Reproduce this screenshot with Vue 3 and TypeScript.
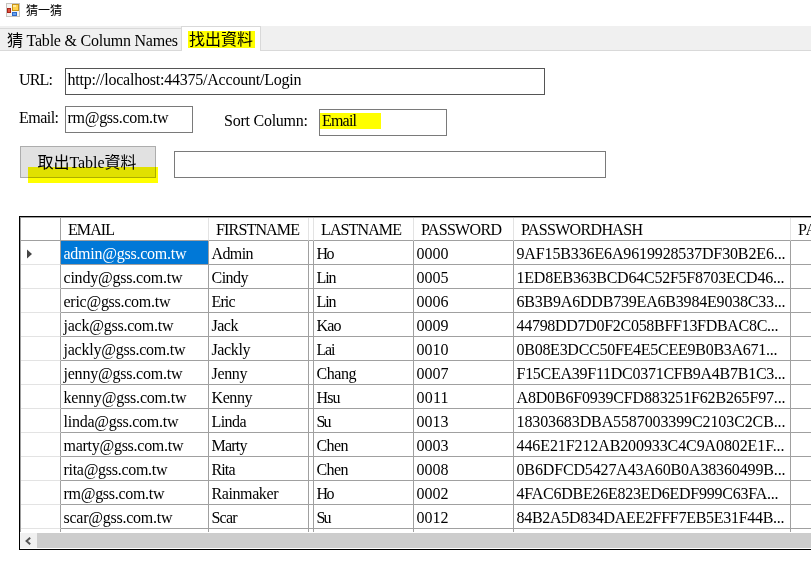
<script setup lang="ts">
import type { Directive } from 'vue'

interface Person {
  email: string
  emailWidth: number
  first: string
  firstWidth: number
  last: string
  lastWidth: number
  password: string
  hash: string
  hashWidth: number
}

/** Tracks a text run so that it takes up the given width in pixels. */
const vFit: Directive<HTMLElement, number> = {
  mounted(el, { value }) {
    const natural = el.getBoundingClientRect().width
    const gaps = Math.max(1, (el.textContent ?? '').length - 1)
    el.style.letterSpacing = `${(value - natural) / gaps}px`
  },
}

type Row = [string, number, string, number, string, number, string, string, number]

const rows: Row[] = [
  ['admin@gss.com.tw', 123, 'Admin', 42, 'Ho', 18, '0000', '9AF15B336E6A9619928537DF30B2E6...', 269],
  ['cindy@gss.com.tw', 119, 'Cindy', 37, 'Lin', 20, '0005', '1ED8EB363BCD64C52F5F8703ECD46...', 268],
  ['eric@gss.com.tw', 107, 'Eric', 24, 'Lin', 20, '0006', '6B3B9A6DDB739EA6B3984E9038C33...', 269],
  ['jack@gss.com.tw', 110, 'Jack', 27, 'Kao', 25, '0009', '44798DD7D0F2C058BFF13FDBAC8C...', 262],
  ['jackly@gss.com.tw', 122, 'Jackly', 39, 'Lai', 19, '0010', '0B08E3DCC50FE4E5CEE9B0B3A671...', 261],
  ['jenny@gss.com.tw', 119, 'Jenny', 36, 'Chang', 40, '0007', 'F15CEA39F11DC0371CFB9A4B7B1C3...', 269],
  ['kenny@gss.com.tw', 123, 'Kenny', 41, 'Hsu', 24, '0011', 'A8D0B6F0939CFD883251F62B265F97...', 269],
  ['linda@gss.com.tw', 115, 'Linda', 35, 'Su', 15, '0013', '18303683DBA5587003399C2103C2CB...', 269],
  ['marty@gss.com.tw', 120, 'Marty', 36, 'Chen', 32, '0003', '446E21F212AB200933C4C9A0802E1F...', 268],
  ['rita@gss.com.tw', 104, 'Rita', 24, 'Chen', 32, '0008', '0B6DFCD5427A43A60B0A38360499B...', 269],
  ['rm@gss.com.tw', 101, 'Rainmaker', 67, 'Ho', 18, '0002', '4FAC6DBE26E823ED6EDF999C63FA...', 262],
  ['scar@gss.com.tw', 109, 'Scar', 26, 'Su', 15, '0012', '84B2A5D834DAEE2FFF7EB5E31F44B...', 268],
]

const people: Person[] = rows.map(
  ([email, emailWidth, first, firstWidth, last, lastWidth, password, hash, hashWidth]) => ({
    email, emailWidth, first, firstWidth, last, lastWidth, password, hash, hashWidth,
  }),
)

const headers = [
  { label: 'EMAIL', width: 47 },
  { label: 'FIRSTNAME', width: 84 },
  { label: '', width: 0 },
  { label: 'LASTNAME', width: 81 },
  { label: 'PASSWORD', width: 81 },
  { label: 'PASSWORDHASH', width: 122 },
  { label: 'PA', width: 19 },
]
</script>

<template>
  <div class="window">
    <header class="titlebar">
      <svg class="app-icon" width="14" height="14" viewBox="0 0 14 14">
        <rect x="0.5" y="0.5" width="13" height="13" fill="#f4f4f2" stroke="#c6c4c0" />
        <rect x="6.5" y="1.5" width="6" height="6" fill="#ffd34e" stroke="#c99416" />
        <rect x="7" y="2" width="3" height="2" fill="#ffeaa0" />
        <rect x="1.5" y="5.5" width="3" height="4" fill="#e0503c" stroke="#a82318" />
        <rect x="6.5" y="9.5" width="4" height="3" fill="#65a2ee" stroke="#2f68c8" />
      </svg>
      <span class="title">猜一猜</span>
    </header>

    <nav class="tabs">
      <div class="tab"><span v-fit="171">猜 Table &amp; Column Names</span></div>
      <div class="tab active"><span class="marked">找出資料</span></div>
    </nav>

    <main class="page">
      <div class="line">
        <label class="caption"><span v-fit="34">URL:</span></label>
        <div class="box url"><span v-fit="234">http://localhost:44375/Account/Login</span></div>
      </div>
      <div class="line second">
        <label class="caption"><span v-fit="40">Email:</span></label>
        <div class="box short"><span v-fit="101">rm@gss.com.tw</span></div>
        <label class="caption sort"><span v-fit="84">Sort Column:</span></label>
        <div class="box short lower"><div class="mark"><span v-fit="35">Email</span></div></div>
      </div>
      <div class="line third">
        <button class="fetch"><span v-fit="99">取出Table資料</span><i class="marker"></i></button>
        <div class="box result"></div>
      </div>

      <section class="grid">
        <div class="rows">
          <div class="row head">
            <div class="cell corner"></div>
            <div v-for="(h, i) in headers" :key="i" class="cell">
              <span v-if="h.label" v-fit="h.width">{{ h.label }}</span>
            </div>
          </div>
          <div v-for="(p, i) in people" :key="p.email" class="row">
            <div class="cell corner">
              <svg v-if="i === 0" width="5" height="10" viewBox="0 0 5 10"><path d="M0 0.5V9.5L5 5Z" fill="#444" /></svg>
            </div>
            <div class="cell" :class="{ selected: i === 0 }"><span v-fit="p.emailWidth">{{ p.email }}</span></div>
            <div class="cell"><span v-fit="p.firstWidth">{{ p.first }}</span></div>
            <div class="cell"></div>
            <div class="cell"><span v-fit="p.lastWidth">{{ p.last }}</span></div>
            <div class="cell"><span v-fit="32">{{ p.password }}</span></div>
            <div class="cell"><span v-fit="p.hashWidth">{{ p.hash }}</span></div>
            <div class="cell"></div>
          </div>
          <div class="row">
            <div v-for="n in 8" :key="n" class="cell" :class="{ corner: n === 1 }"></div>
          </div>
        </div>
        <div class="scrollbar">
          <div class="arrow">
            <svg width="6" height="8" viewBox="0 0 6 8"><path d="M5.2 0.7L1.5 4L5.2 7.3" fill="none" stroke="#555" stroke-width="1.9" /></svg>
          </div>
          <div class="thumb"></div>
        </div>
      </section>
    </main>
  </div>
</template>

<style>
body {
  margin: 0;
  overflow: hidden;
}
</style>

<style scoped>
.window {
  box-sizing: border-box;
  width: 811px;
  height: 576px;
  overflow: hidden;
  background: #fff;
  color: #000;
  font: 16px/24px "Liberation Serif", "Noto Sans CJK TC", serif;
  white-space: nowrap;
}
.titlebar {
  display: flex;
  height: 26px;
  padding-left: 6px;
  gap: 6px;
}
.app-icon {
  margin-top: 3px;
}
.title {
  font: 12px/20px "Noto Sans CJK TC", sans-serif;
}
.tabs {
  display: flex;
  align-items: flex-end;
  box-sizing: border-box;
  height: 25px;
  background: #f0f0f0;
  border-bottom: 1px solid #d9d9d9;
}
.tab {
  box-sizing: border-box;
  width: 181px;
  height: 22px;
  padding-left: 7px;
  border-top: 1px solid #d9d9d9;
  line-height: 23px;
}
.tab.active {
  width: 80px;
  height: 25px;
  margin-bottom: -1px;
  padding: 4px 0 0 6px;
  background: #fff;
  border: 1px solid #d9d9d9;
  border-bottom: 0;
}
.marked {
  display: block;
  width: 66px;
  height: 17px;
  padding-left: 1px;
  background: #ff0;
  line-height: 17px;
}
.page {
  padding: 17px 0 0 19px;
}
.line {
  display: flex;
  height: 27px;
}
.second {
  margin-top: 11px;
}
.third {
  height: 32px;
  margin-top: 13px;
}
.caption {
  width: 46px;
}
.sort {
  width: 95px;
  margin: 3px 0 0 31px;
}
.box {
  box-sizing: border-box;
  height: 27px;
  padding-left: 1.5px;
  border: 1px solid #7a7a7a;
  line-height: 22px;
}
.url {
  width: 480px;
  border-color: #555;
}
.short {
  width: 128px;
}
.lower {
  margin-top: 3px;
  padding: 3px 0 0;
}
.mark {
  width: 61px;
  height: 16px;
  box-sizing: border-box;
  padding-left: 2px;
  background: #ff0;
  line-height: 16px;
}
.fetch {
  position: relative;
  box-sizing: border-box;
  width: 136px;
  height: 32px;
  margin: 0 18px 0 1px;
  padding: 0 0 0 16.5px;
  border: 1px solid #adadad;
  background: #e1e1e1;
  color: #000;
  font: inherit;
  line-height: 31px;
  text-align: left;
}
.marker {
  position: absolute;
  left: 7px;
  top: 20px;
  width: 130px;
  height: 16px;
  background: #ff0;
  mix-blend-mode: multiply;
}
.result {
  width: 432px;
  margin-top: 5px;
}
.grid {
  box-sizing: border-box;
  width: 900px;
  height: 334px;
  margin-top: 38px;
  border: 1px solid #000;
}
.rows {
  height: 315px;
  box-sizing: border-box;
  overflow: hidden;
  border-top: 1px solid #a0a0a0;
  border-left: 1px solid #a0a0a0;
}
.row {
  display: grid;
  grid-template-columns: 40px 148px 100px 5px 100px 100px 277px 100px;
  height: 24px;
}
.cell {
  box-sizing: border-box;
  height: 24px;
  padding: 1px 0 0 2.5px;
  border-right: 1px solid #a0a0a0;
  border-bottom: 1px solid #a0a0a0;
  overflow: hidden;
}
.cell:nth-child(4) {
  padding: 0;
}
.cell.corner {
  padding: 8px 0 0 6px;
  border-bottom-color: #e3e3e3;
  line-height: 0;
}
.selected {
  background: #0078d7;
  color: #fff;
}
.head,
.head .cell {
  height: 23px;
}
.head .cell {
  padding: 0 0 0 7px;
  border-right-color: #e3e3e3;
}
.head .cell:nth-child(4) {
  padding: 0;
}
.head .cell.corner {
  border-right-color: #a0a0a0;
  border-bottom-color: #a0a0a0;
}
.scrollbar {
  display: flex;
  height: 15px;
  margin-top: 1px;
  background: #f0f0f0;
}
.arrow {
  width: 12px;
  padding: 4px 0 0 5px;
  line-height: 0;
}
.thumb {
  flex: 1;
  background: #cdcdcd;
}
</style>
